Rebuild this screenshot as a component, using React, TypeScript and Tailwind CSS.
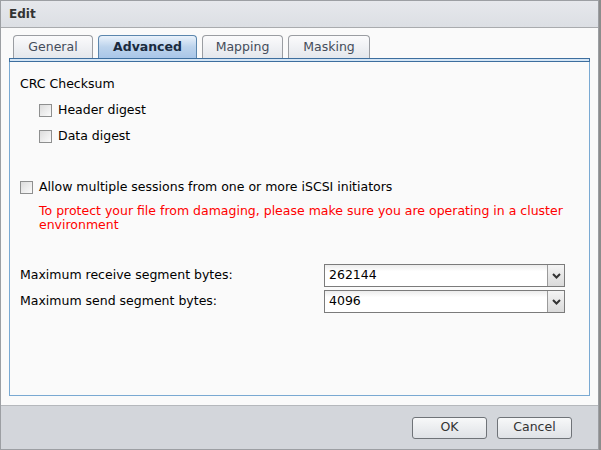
import React from "react";

const font = { fontFamily: '"DejaVu Sans", Verdana, sans-serif' };

function Check() {
  return (
    <span className="inline-block w-[13px] h-[13px] border border-[#8e8f8f] bg-gradient-to-br from-[#dcdcdc] to-[#fbfbfb] shrink-0" />
  );
}

function Tab({ label, active, w }: { label: string; active?: boolean; w: string }) {
  return (
    <div
      className={
        "h-[23px] flex items-center justify-center rounded-t-[4px] border border-b-0 text-[12.5px] " +
        w +
        (active
          ? " border-[#5b86ad] bg-gradient-to-b from-[#eaf2fb] via-[#bcd3ec] to-[#a9c6e8] font-bold text-[#1a2a3d]"
          : " border-[#9a9da2] bg-gradient-to-b from-[#fbfbfc] to-[#e4e7ec] text-[#444c5a]")
      }
    >
      {label}
    </div>
  );
}

function Select({ value }: { value: string }) {
  return (
    <div className="w-[241px] h-[23px] border border-[#7b7b7b] flex bg-white">
      <div className="flex-1 flex items-center pl-[4px] text-[12.5px] text-black bg-gradient-to-b from-[#ececec] to-white to-[30%]">
        {value}
      </div>
      <div className="w-[17px] border-l border-[#9a9a9a] bg-gradient-to-b from-[#f4f4f4] to-[#dadada] flex items-center justify-center">
        <svg width="9" height="6" viewBox="0 0 9 6">
          <path d="M1 1 L4.5 4.5 L8 1" stroke="#333" strokeWidth="2" fill="none" />
        </svg>
      </div>
    </div>
  );
}

function Button({ label }: { label: string }) {
  return (
    <div className="w-[75px] h-[22px] rounded-[3px] border border-[#6f7378] bg-gradient-to-b from-[#f7f8f9] to-[#dfe2e6] flex items-center justify-center text-[12.5px] text-[#333]">
      {label}
    </div>
  );
}

export default function App() {
  return (
    <div className="w-[601px] h-[450px] bg-[#8c8c8c] relative overflow-hidden" style={font}>
      <div className="w-[599px] h-[450px] flex flex-col border border-[#9c9fa3] bg-[#fafafa]">
        {/* Title */}
        <div className="h-[27px] shrink-0 bg-gradient-to-b from-[#e6e8ec] to-[#dcdfe4] border-b border-[#a9abae] flex items-center pl-[8px]">
          <span className="text-[12px] font-bold text-[#333]">Edit</span>
        </div>
        {/* Body */}
        <div className="flex-1 flex flex-col px-[8px] pt-[8px] pb-[9px]">
          <div className="flex gap-[5px] pl-[4px] h-[22px] items-end">
            <Tab label="General" w="w-[80px]" />
            <Tab label="Advanced" w="w-[99px]" active />
            <Tab label="Mapping" w="w-[81px]" />
            <Tab label="Masking" w="w-[82px]" />
          </div>
          <div className="h-[4px] border border-[#3d6e9e] bg-[#d4e5f5]" />
          <div className="flex-1 border border-t-0 border-[#79a9d2] bg-[#fafafa] pl-[10px] pr-[24px] pt-[14px] text-[12.5px] text-black">
            <div className="h-[16px] flex items-center">CRC Checksum</div>
            <div className="pl-[19px] mt-[10px] flex flex-col gap-[10px]">
              <div className="flex items-center gap-[6px] h-[16px]">
                <Check />
                <span>Header digest</span>
              </div>
              <div className="flex items-center gap-[6px] h-[16px]">
                <Check />
                <span>Data digest</span>
              </div>
            </div>
            <div className="mt-[35px] flex items-center gap-[6px] h-[16px]">
              <Check />
              <span>Allow multiple sessions from one or more iSCSI initiators</span>
            </div>
            <div className="pl-[19px] mt-[9px] text-[#ff0000] leading-[14px]">
              To protect your file from damaging, please make sure you are operating in a cluster environment
            </div>
            <div className="mt-[32px] flex flex-col gap-[3px]">
              <div className="flex items-center justify-between">
                <span>Maximum receive segment bytes:</span>
                <Select value="262144" />
              </div>
              <div className="flex items-center justify-between">
                <span>Maximum send segment bytes:</span>
                <Select value="4096" />
              </div>
            </div>
          </div>
        </div>
        {/* Footer */}
        <div className="h-[44px] shrink-0 bg-[#d3d6db] border-t border-[#b5b8bc] flex items-center justify-end gap-[10px] pr-[26px]">
          <Button label="OK" />
          <Button label="Cancel" />
        </div>
      </div>
    </div>
  );
}
